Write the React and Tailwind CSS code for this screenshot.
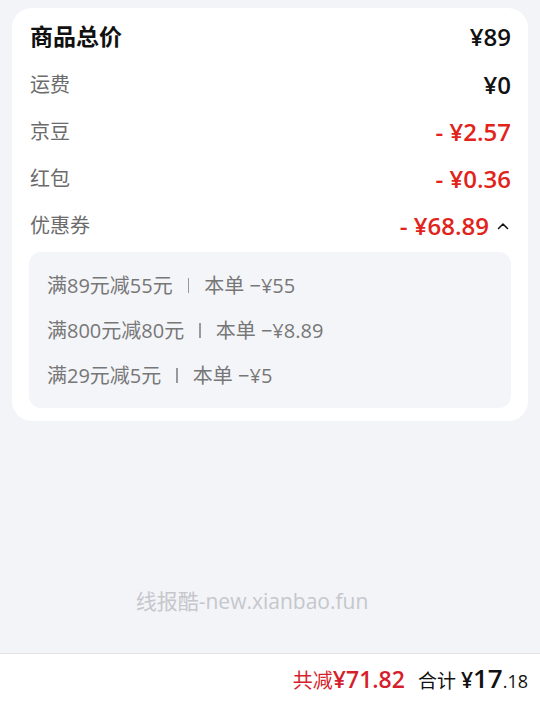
import React from "react";

const F = { fontFamily: '"Open Sans", "Noto Sans CJK SC", sans-serif' };

function Row({ label, value, red, caret }) {
  return (
    <div className="flex h-[47px] items-center justify-between">
      <span className="pl-px text-[20px] text-[#6b6b6b]">{label}</span>
      <span className="flex items-center">
        <span className={`text-[24px] font-semibold ${red ? "text-[#e2231a]" : "text-[#111]"}`}>{value}</span>
        {caret && (
          <svg className="ml-[8px] mr-[2px]" width="12" height="8" viewBox="0 0 12 8" fill="none">
            <path d="M1.5 6.5 L6 2 L10.5 6.5" stroke="#111" strokeWidth="1.5" strokeLinecap="round" strokeLinejoin="round" />
          </svg>
        )}
      </span>
    </div>
  );
}

function Coupon({ a, b }) {
  return (
    <div className="flex h-[45px] items-center text-[20px] text-[#777]">
      <span>{a}</span>
      <span className="mx-[15px] h-[15px] w-[1.5px] bg-[#999]" />
      <span>{b}</span>
    </div>
  );
}

export default function App() {
  return (
    <div className="flex min-h-[703px] w-[540px] flex-col bg-[#f3f4f8]" style={F}>
      <div className="mx-[12px] mt-[8px] rounded-[20px] bg-white px-[17px] pb-[13px] pt-[4px]">
        <div className="flex h-[49px] items-center justify-between">
          <span className="pl-px text-[23px] font-bold text-[#111]">商品总价</span>
          <span className="text-[24px] font-semibold text-[#111]">¥89</span>
        </div>
        <Row label="运费" value="¥0" />
        <Row label="京豆" value="- ¥2.57" red />
        <Row label="红包" value="- ¥0.36" red />
        <Row label="优惠券" value="- ¥68.89" red caret />
        <div className="mt-[3px] rounded-[12px] bg-[#f4f5f9] pb-[10px] pl-[18px] pt-[11px]">
          <Coupon a="满89元减55元" b="本单 −¥55" />
          <Coupon a="满800元减80元" b="本单 −¥8.89" />
          <Coupon a="满29元减5元" b="本单 −¥5" />
        </div>
      </div>
      <div className="flex flex-1 items-end justify-center pb-[36px]">
        <span className="pr-[36px] text-[21px] text-[#c5c7cc]">线报酷-new.xianbao.fun</span>
      </div>
      <div className="flex h-[50px] items-center justify-end border-t border-[#e3e3e3] bg-white pr-[12px]">
        <div className="flex items-baseline">
          <span className="text-[20px] text-[#d61f2c]">共减</span>
          <span className="text-[23px] font-semibold text-[#d61f2c]">¥71.82</span>
          <span className="ml-[13px] text-[19px] text-[#111]">合计</span>
          <span className="ml-[5px] text-[21px] font-semibold text-[#111]">¥</span>
          <span className="text-[26px] font-semibold text-[#111]">17</span>
          <span className="text-[18px] font-medium text-[#111]">.18</span>
        </div>
      </div>
    </div>
  );
}
